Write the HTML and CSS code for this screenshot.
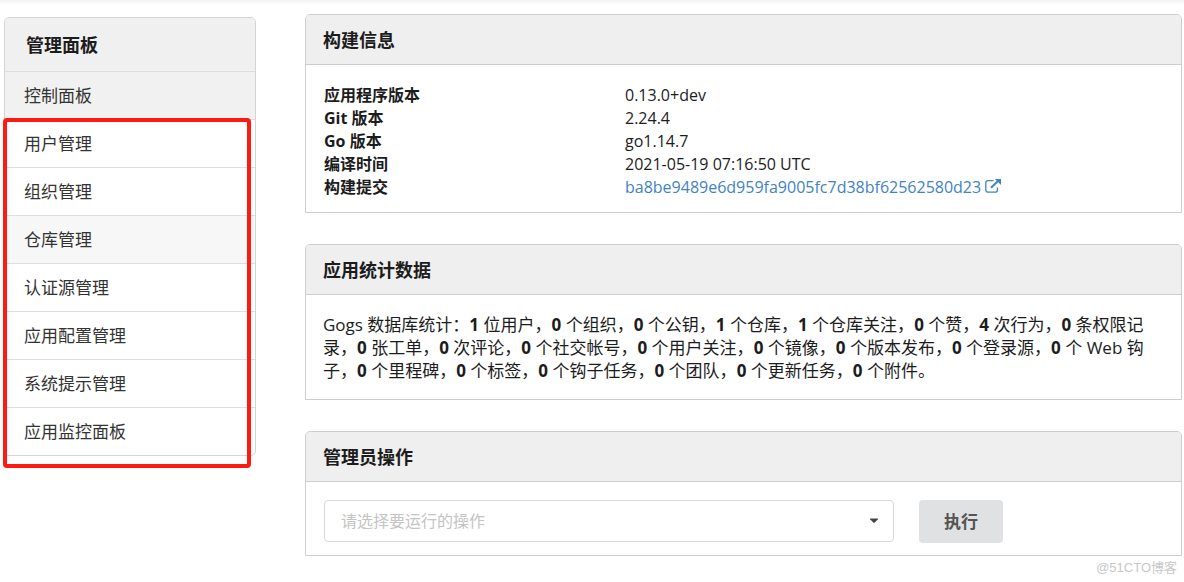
FILE: index.html
```html
<!DOCTYPE html>
<html lang="zh-CN">
<head>
<meta charset="utf-8">
<meta name="viewport" content="width=device-width, initial-scale=1">
<title>管理面板</title>
<link rel="stylesheet" href="styles.css">
</head>
<body>
<div class="top-shade"></div>
<div class="page">
  <aside class="sidebar">
    <h4 class="sidebar-title">管理面板</h4>
    <nav class="menu">
      <a class="menu-item active" href="#">控制面板</a>
      <a class="menu-item" href="#">用户管理</a>
      <a class="menu-item" href="#">组织管理</a>
      <a class="menu-item hovered" href="#">仓库管理</a>
      <a class="menu-item" href="#">认证源管理</a>
      <a class="menu-item" href="#">应用配置管理</a>
      <a class="menu-item" href="#">系统提示管理</a>
      <a class="menu-item" href="#">应用监控面板</a>
    </nav>
    <div class="highlight"></div>
  </aside>
  <main class="content">
    <section class="panel">
      <h4 class="panel-title">构建信息</h4>
      <dl class="panel-body info">
        <dt>应用程序版本</dt><dd>0.13.0+dev</dd>
        <dt>Git 版本</dt><dd>2.24.4</dd>
        <dt>Go 版本</dt><dd>go1.14.7</dd>
        <dt>编译时间</dt><dd>2021-05-19 07:16:50 UTC</dd>
        <dt>构建提交</dt>
        <dd><a class="commit" href="#">ba8be9489e6d959fa9005fc7d38bf62562580d23 <svg class="external" viewBox="0 0 16 14" aria-hidden="true"><path d="M8.500 1.600H3A2.200 2.200 0 0 0 .8 3.800V11A2.200 2.200 0 0 0 3 13.200h7.200A2.200 2.200 0 0 0 12.400 11V8.500" fill="none" stroke="currentColor" stroke-width="1.300"/><path d="M6 8.800 13 2" fill="none" stroke="currentColor" stroke-width="2"/><path d="M10 0h6v6z" fill="currentColor"/></svg></a></dd>
      </dl>
    </section>
    <section class="panel">
      <h4 class="panel-title">应用统计数据</h4>
      <p class="panel-body stats">Gogs 数据库统计：<b>1</b> 位用户，<b>0</b> 个组织，<b>0</b> 个公钥，<b>1</b> 个仓库，<b>1</b> 个仓库关注，<b>0</b> 个赞，<b>4</b> 次行为，<b>0</b> 条权限记录，<b>0</b> 张工单，<b>0</b> 次评论，<b>0</b> 个社交帐号，<b>0</b> 个用户关注，<b>0</b> 个镜像，<b>0</b> 个版本发布，<b>0</b> 个登录源，<b>0</b> 个 Web 钩子，<b>0</b> 个里程碑，<b>0</b> 个标签，<b>0</b> 个钩子任务，<b>0</b> 个团队，<b>0</b> 个更新任务，<b>0</b> 个附件。</p>
    </section>
    <section class="panel">
      <h4 class="panel-title">管理员操作</h4>
      <form class="panel-body actions">
        <div class="dropdown">
          <select class="dropdown-field" aria-label="请选择要运行的操作"><option>请选择要运行的操作</option></select>
          <svg class="caret" viewBox="0 0 10 6" aria-hidden="true"><path d="M1.500 .5h7q1 0 .4 .8L5.700 4.600q-.7.700-1.400 0L1.100 1.300Q.5 .5 1.500 .5z" fill="#444"/></svg>
        </div>
        <button class="run" type="button">执行</button>
      </form>
    </section>
  </main>
</div>
<div class="watermark">@51CTO博客</div>
</body>
</html>
```
FILE: styles.css
```css
* { box-sizing: border-box; }

body {
  margin: 0;
  position: relative;
  background: #fff;
  color: #1c1c1d;
  font-family: "Open Sans", "Noto Sans CJK SC", sans-serif;
  font-size: 16px;
  line-height: 23px;
}

h4, p, dl, dd { margin: 0; }

.top-shade {
  height: 5px;
  background: linear-gradient(#f3f3f3, #fff);
}

.page {
  display: grid;
  grid-template-columns: 252fr 877fr;
  gap: 49px;
  align-items: start;
  padding: 9px 2px 26px 4px;
}

.sidebar {
  position: relative;
  margin-top: 3px;
  border: 1px solid #d4d4d5;
  border-radius: 5px;
}

.sidebar-title {
  padding: 16px 21px 14px;
  background: #f0f0f0;
  border-radius: 4px 4px 0 0;
  font-size: 18px;
}

.menu-item {
  display: block;
  padding: 12px 19px;
  border-top: 1px solid #dededf;
  color: #333;
  font-size: 17px;
  text-decoration: none;
}

.menu-item.active { background: #f1f1f1; }
.menu-item.hovered { background: #f7f7f7; }
.menu-item:last-child { border-radius: 0 0 5px 5px; }

.highlight {
  position: absolute;
  top: 100px;
  right: 4px;
  bottom: -13px;
  left: -2px;
  border: 4px solid #fd1a10;
  border-radius: 4px;
  pointer-events: none;
}

.content {
  display: grid;
  gap: 31px;
}

.panel {
  border: 1px solid #cecece;
  border-radius: 5px 5px 0 0;
}

.panel-title {
  padding: 14px 17px 12px;
  background: #efefef;
  border-bottom: 1px solid #cecece;
  border-radius: 4px 4px 0 0;
  font-size: 18px;
}

.panel-body { padding: 18px 18px 17px; }

.info {
  display: grid;
  grid-template-columns: 301fr 538fr;
  padding-top: 19px;
  padding-bottom: 13px;
}

.info dt { font-weight: 700; }

.commit {
  color: #4183c4;
  text-decoration: none;
}

.external {
  width: 16px;
  height: 14px;
}

.stats {
  padding-left: 17px;
  font-size: 17px;
}

.actions {
  display: flex;
  gap: 25px;
  padding-bottom: 12px;
}

.dropdown {
  display: grid;
  flex: 0 1 570px;
  align-items: center;
  height: 42px;
}

.dropdown-field,
.caret { grid-area: 1 / 1; }

.dropdown-field {
  width: 100%;
  height: 42px;
  padding: 0 16px;
  appearance: none;
  background: #fff;
  border: 1px solid #d9d9da;
  border-radius: 4px;
  color: #c4c4c4;
  font: inherit;
}

.caret {
  justify-self: end;
  width: 10px;
  height: 6px;
  margin-right: 15px;
  pointer-events: none;
}

.run {
  padding: 10px 25px;
  background: #e0e1e2;
  border: 0;
  border-radius: 4px;
  color: #545454;
  font: inherit;
  font-size: 17px;
  font-weight: 700;
}

.watermark {
  position: absolute;
  right: 7px;
  bottom: 4px;
  color: #c8c8c8;
  font-family: "Liberation Sans", "Noto Sans CJK SC", sans-serif;
  font-size: 13px;
  line-height: 20px;
}
```
